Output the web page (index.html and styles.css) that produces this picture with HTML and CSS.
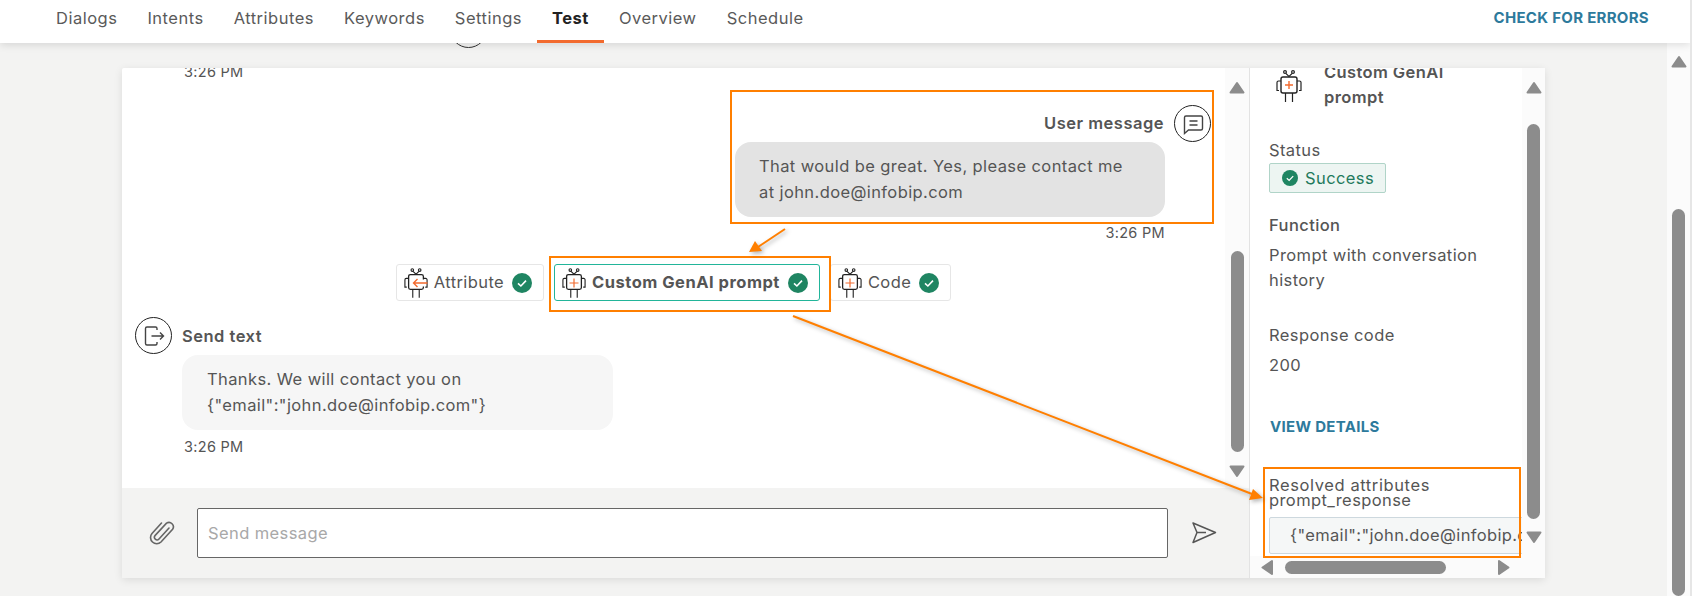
FILE: index.html
```html
<!DOCTYPE html>
<html>
  <head>
    <title>Test</title>
    <meta charset="UTF-8">
    <link rel="stylesheet" href="styles.css">
  </head>
  <body>
    <svg class="icon-defs" width="0" height="0">
      <symbol id="robot" viewBox="0 0 26 32">
        <g fill="none" stroke="#222" stroke-width="1.2">
          <circle cx="9" cy="2" r="1.4"/>
          <circle cx="17" cy="2" r="1.4"/>
          <path d="M9.8 3.4 13 6.5 16.2 3.4"/>
          <rect x="5" y="7" width="16" height="16" rx="2" stroke-width="1.4"/>
          <path d="M5 11H2.5A1.5 1.5 0 0 0 1 12.5V20.5H3M21 11H23.5A1.5 1.5 0 0 1 25 12.5V20.5H23M9.5 23V32M16.5 23V32"/>
        </g>
      </symbol>
      <symbol id="check" viewBox="0 0 20 20">
        <circle cx="10" cy="10" r="10" fill="#1f8562"/>
        <path d="M6 10.4 8.9 13 14 7.6" fill="none" stroke="#fff" stroke-width="1.6"/>
      </symbol>
      <symbol id="arrow-up" viewBox="0 0 16 13">
        <path d="M8 2 14.5 11.5H1.5Z" fill="#8c8c8c" stroke="#8c8c8c" stroke-width="2" stroke-linejoin="round"/>
      </symbol>
    </svg>

    <header class="topbar">
      <nav class="tabs">
        <a class="tab">Dialogs</a>
        <a class="tab">Intents</a>
        <a class="tab">Attributes</a>
        <a class="tab">Keywords</a>
        <a class="tab">Settings</a>
        <a class="tab active">Test</a>
        <a class="tab">Overview</a>
        <a class="tab">Schedule</a>
      </nav>
      <a class="link check-errors">CHECK FOR ERRORS</a>
    </header>

    <div class="workspace">
      <span class="peek-circle"></span>
      <main class="stage">
        <section class="card">
          <div class="chat">
            <div class="chat-body">
              <div class="messages">
                <div class="time time-clipped">3:26 PM</div>

                <div class="msg-head msg-head-right">
                  <span class="msg-title">User message</span>
                  <span class="round-icon">
                    <svg width="24" height="24" viewBox="0 0 24 24" fill="none" stroke="#444" stroke-width="1.4">
                      <path d="M3.5 5.5A1.5 1.5 0 0 1 5 4H20A1.5 1.5 0 0 1 21.5 5.5V16.5A1.5 1.5 0 0 1 20 18H7.5L3.5 21.5Z"/>
                      <path d="M8.5 9H16.5M8.5 13H16.5"/>
                    </svg>
                  </span>
                </div>
                <div class="bubble bubble-user">That would be great. Yes, please contact me<br>at john.doe@infobip.com</div>
                <div class="time time-right">3:26 PM</div>

                <div class="chips">
                  <div class="chip">
                    <svg class="chip-robot" width="24" height="30"><use href="#robot"/><path d="M19.4 11.5V18.5" stroke="#fff" stroke-width="4"/><path d="M23.5 15H9.5M13.5 11 9.5 15 13.5 19" fill="none" stroke="#f26a2e" stroke-width="1.4"/></svg>
                    <span>Attribute</span>
                    <svg width="20" height="20"><use href="#check"/></svg>
                  </div>
                  <div class="chip chip-selected">
                    <svg class="chip-robot" width="24" height="30"><use href="#robot"/><path d="M12 10.5V19.5M7.5 15H16.5" fill="none" stroke="#f26a2e" stroke-width="1.2"/></svg>
                    <strong>Custom GenAI prompt</strong>
                    <svg width="20" height="20"><use href="#check"/></svg>
                  </div>
                  <div class="chip">
                    <svg class="chip-robot" width="24" height="30"><use href="#robot"/><path d="M12 10.5V19.5M7.5 15H16.5" fill="none" stroke="#f26a2e" stroke-width="1.2"/></svg>
                    <span>Code</span>
                    <svg width="20" height="20"><use href="#check"/></svg>
                  </div>
                </div>

                <div class="msg-head msg-head-left">
                  <span class="round-icon">
                    <svg width="24" height="24" viewBox="0 0 24 24" fill="none" stroke="#444" stroke-width="1.4">
                      <path d="M15 6V4.5A1.5 1.5 0 0 0 13.5 3H5A1.5 1.5 0 0 0 3.5 4.5V19.5A1.5 1.5 0 0 0 5 21H13.5A1.5 1.5 0 0 0 15 19.5V18"/>
                      <path d="M9.5 12H21.5M18 8.5 21.5 12 18 15.5"/>
                    </svg>
                  </span>
                  <span class="msg-title">Send text</span>
                </div>
                <div class="bubble bubble-bot">Thanks. We will contact you on<br>{"email":"john.doe@infobip.com"}</div>
                <div class="time time-left">3:26 PM</div>
              </div>

              <div class="scrollbar scrollbar-chat">
                <svg class="scroll-arrow" width="16" height="13"><use href="#arrow-up"/></svg>
                <span class="thumb"></span>
                <svg class="scroll-arrow flip" width="16" height="13"><use href="#arrow-up"/></svg>
              </div>
            </div>

            <div class="composer">
              <svg class="clip-icon" width="26" height="28" viewBox="0 0 26 28" fill="none" stroke="#666" stroke-width="1.6" stroke-linecap="round">
                <path d="M20 9 10 20A2.6 2.6 0 0 1 6.2 16.4L17.5 4.2A4.4 4.4 0 0 1 23.6 10.3L12 23A6.2 6.2 0 0 1 3 14.5L12.5 4"/>
              </svg>
              <div class="message-input">Send message</div>
              <svg class="send-icon" width="26" height="24" viewBox="0 0 26 24" fill="none" stroke="#555" stroke-width="1.5" stroke-linejoin="round">
                <path d="M2 2 24.5 11.5 2 21.5 6 11.5ZM6 11.5H15"/>
              </svg>
            </div>
          </div>

          <aside class="details">
            <div class="details-content">
              <div class="details-head">
                <svg class="details-robot" width="26" height="32"><use href="#robot"/><path d="M13 11V19M9 15H17" fill="none" stroke="#f26a2e" stroke-width="1.4"/></svg>
                <strong>Custom GenAI<br>prompt</strong>
              </div>
              <div class="label label-status">Status</div>
              <div class="badge">
                <svg width="16" height="16"><use href="#check"/></svg>
                Success
              </div>
              <div class="label label-function">Function</div>
              <div class="value">Prompt with conversation<br>history</div>
              <div class="label label-response">Response code</div>
              <div class="value">200</div>
              <a class="link view-details">VIEW DETAILS</a>
              <div class="resolved-title">Resolved attributes</div>
              <div class="resolved-name">prompt_response</div>
              <div class="resolved-field">{"email":"john.doe@infobip.com"}</div>
            </div>

            <div class="scrollbar scrollbar-details">
              <svg class="scroll-arrow" width="16" height="13"><use href="#arrow-up"/></svg>
              <span class="thumb"></span>
              <svg class="scroll-arrow flip" width="16" height="13"><use href="#arrow-up"/></svg>
            </div>

            <div class="scrollbar-h">
              <svg class="scroll-arrow left" width="16" height="13"><use href="#arrow-up"/></svg>
              <span class="thumb-h"></span>
              <svg class="scroll-arrow right" width="16" height="13"><use href="#arrow-up"/></svg>
            </div>
          </aside>
        </section>
      </main>

      <div class="scrollbar scrollbar-page">
        <svg class="scroll-arrow" width="16" height="13"><use href="#arrow-up"/></svg>
        <span class="thumb"></span>
      </div>
    </div>

    <!-- orange callouts drawn on top of the screenshot -->
    <div class="callout callout-user"></div>
    <div class="callout callout-prompt"></div>
    <div class="callout callout-resolved"></div>
    <svg class="callout-arrows" width="1692" height="596">
      <path class="arrow-line" d="M785 229 758 247"/>
      <path class="arrow-head" d="M749 252 755 241 762 251Z"/>
      <path class="arrow-line" d="M793 316 1252 494"/>
      <path class="arrow-head" d="M1263 498 1249 500 1253 489Z"/>
    </svg>
  </body>
</html>
```

FILE: styles.css
```css
html, body {
  margin: 0;
  padding: 0;
  width: 1692px;
  height: 596px;
  overflow: hidden;
}

body {
  box-sizing: border-box;
  border-right: 2px solid #e6e6e6;
  background-color: #f3f3f2;
  font-family: Inter, "Noto Sans", sans-serif;
  font-size: 16.5px;
  letter-spacing: 0.4px;
  color: #555;
  position: relative;
}

.icon-defs {
  position: absolute;
}

.link {
  color: #2d7a9c;
  font-weight: 700;
  font-size: 15px;
  letter-spacing: 0.3px;
}

/* top bar */
.topbar {
  position: relative;
  z-index: 2;
  height: 43px;
  padding: 0 41px 0 41px;
  box-sizing: border-box;
  display: flex;
  align-items: center;
  justify-content: space-between;
  background-color: #fff;
  box-shadow: 0 2px 8px rgba(0, 0, 0, 0.12);
}

.tabs {
  display: flex;
  height: 100%;
}

.tab {
  padding: 0 15px;
  line-height: 37px;
  letter-spacing: 0.5px;
  color: #5a5a5a;
  border-bottom: 3px solid transparent;
  height: 40px;
}

.tab.active {
  color: #222;
  font-weight: 700;
  border-bottom-color: #f26a2e;
}

.check-errors {
  margin-bottom: 8px;
}

/* page below the bar */
.workspace {
  position: relative;
  display: flex;
  height: 553px;
}

.peek-circle {
  position: absolute;
  top: -32px;
  left: 450px;
  width: 35px;
  height: 35px;
  border: 1px solid #333;
  border-radius: 50%;
}

.stage {
  flex: 1;
  padding: 25px 122px 0 122px;
}

.card {
  position: relative;
  display: flex;
  height: 510px;
  background-color: #fff;
  box-shadow: 0 2px 8px rgba(0, 0, 0, 0.1);
  border-radius: 2px;
}

.chat {
  width: 1127px;
  display: flex;
  flex-direction: column;
}

.chat-body {
  flex: 1;
  display: flex;
  min-height: 0;
}

.messages {
  flex: 1;
  overflow: hidden;
}

.time {
  font-size: 14.5px;
  line-height: 20px;
  letter-spacing: 0.3px;
}

.time-clipped {
  margin: -6px 0 0 62px;
}

.time-right {
  margin: 6px 60px 0 0;
  text-align: right;
}

.time-left {
  margin: 7px 0 0 62px;
}

.msg-head {
  display: flex;
  align-items: center;
  gap: 10px;
  height: 37px;
}

.msg-head-right {
  justify-content: flex-end;
  margin-top: 23px;
  padding-right: 14px;
}

.msg-head-right .msg-title {
  margin-bottom: 2px;
}

.msg-head-left {
  margin-top: 16px;
  padding-left: 13px;
}

.msg-title {
  font-weight: 600;
  letter-spacing: 0.5px;
}

.round-icon {
  box-sizing: border-box;
  width: 37px;
  height: 37px;
  border: 1px solid #222;
  border-radius: 50%;
  display: flex;
  align-items: center;
  justify-content: center;
}

.bubble {
  box-sizing: border-box;
  width: 430px;
  height: 75px;
  padding-top: 11px;
  line-height: 26px;
  border-radius: 16px;
}

.bubble-user {
  margin: 0 60px 0 auto;
  padding-left: 24px;
  background-color: #e3e3e3;
}

.bubble-bot {
  margin: 1px 0 0 60px;
  padding-left: 25px;
  width: 431px;
  background-color: #f6f6f6;
}

.chips {
  display: flex;
  justify-content: center;
  gap: 10px;
  margin-top: 21px;
}

.chip {
  box-sizing: border-box;
  height: 37px;
  padding: 0 11px 2px 7px;
  display: flex;
  align-items: center;
  gap: 6px;
  border: 1px solid #e6e6e6;
  border-radius: 3px;
}

.chip > span,
.chip > strong {
  margin-right: 2px;
}

.chip > strong {
  letter-spacing: 0.5px;
}

.chip > svg {
  margin-bottom: -2px;
}

.chip-selected {
  border-color: #22b59a;
}

.chip-robot {
  flex: none;
}

/* scrollbars */
.scrollbar {
  display: flex;
  flex-direction: column;
  align-items: center;
  background-color: #fbfbfb;
}

.scroll-arrow {
  flex: none;
}

.scroll-arrow.flip {
  transform: rotate(180deg);
}

.scroll-arrow.left {
  transform: rotate(-90deg);
}

.scroll-arrow.right {
  transform: rotate(90deg);
}

.thumb {
  width: 13px;
  background-color: #8c8c8c;
  border-radius: 7px;
}

.scrollbar-chat {
  width: 24px;
  padding-top: 13px;
}

.scrollbar-chat .thumb {
  height: 201px;
  margin: 157px 0 13px;
}

.scrollbar-details {
  width: 23px;
  padding-top: 13px;
  border-left: 0;
}

.scrollbar-details .thumb {
  height: 395px;
  margin: 30px 0 12px;
}

.scrollbar-page {
  width: 23px;
  padding-top: 12px;
}

.scrollbar-page .thumb {
  height: 400px;
  margin-top: 141px;
}

/* composer */
.composer {
  height: 90px;
  display: flex;
  align-items: center;
  background-color: #f3f3f2;
  padding: 0 23px 0 27px;
}

.clip-icon {
  flex: none;
  margin-right: 22px;
}

.message-input {
  box-sizing: border-box;
  width: 971px;
  height: 50px;
  line-height: 48px;
  padding-left: 10px;
  background-color: #fff;
  border: 1px solid #666;
  border-radius: 2px;
  color: #a8a8a8;
}

.send-icon {
  flex: none;
  margin-left: 23px;
}

/* details side panel */
.details {
  box-sizing: border-box;
  width: 296px;
  border-left: 1px solid #e3e3e3;
  display: grid;
  grid-template-columns: 272px 23px;
  grid-template-rows: 488px 22px;
}

.details-content {
  overflow: hidden;
  padding-left: 19px;
}

.details-head {
  display: flex;
  align-items: flex-start;
  margin-top: -8px;
  line-height: 25px;
}

.details-head strong {
  font-weight: 600;
  margin-left: 22px;
}

.details-robot {
  margin: 10px 0 0 7px;
  flex: none;
}

.label {
  line-height: 20px;
}

.label-status {
  margin-top: 30px;
}

.label-function {
  margin-top: 22px;
  font-weight: 500;
}

.label-response {
  margin-top: 32px;
}

.value {
  margin-top: 8px;
  line-height: 25px;
}

.badge {
  box-sizing: border-box;
  width: 117px;
  height: 30px;
  margin-top: 3px;
  padding-left: 12px;
  display: flex;
  align-items: center;
  gap: 7px;
  background-color: #edf5f2;
  border: 1px solid #b0d4c8;
  border-radius: 2px;
  color: #1f7a5c;
}

.view-details {
  display: block;
  margin: 39px 0 0 1px;
  line-height: 20px;
}

.resolved-title {
  margin-top: 40px;
  line-height: 16px;
  letter-spacing: 0.6px;
}

.resolved-name {
  line-height: 15px;
}

.resolved-field {
  box-sizing: border-box;
  width: 320px;
  height: 37px;
  margin-top: 9px;
  padding-left: 20px;
  line-height: 34px;
  letter-spacing: 0.35px;
  white-space: nowrap;
  overflow: hidden;
  background-color: #f5f7f7;
  border: 1px solid #cdd8de;
  border-radius: 2px;
}

.details > .scrollbar-details {
  grid-row: 1 / 3;
  grid-column: 2;
}

.scrollbar-h {
  grid-row: 2;
  grid-column: 1;
  display: flex;
  align-items: center;
  padding: 0 4px 0 9px;
  background-color: #fbfbfb;
}

.thumb-h {
  flex: none;
  width: 161px;
  height: 13px;
  margin: 0 50px 0 10px;
  background-color: #8c8c8c;
  border-radius: 7px;
}

/* callouts */
.callout {
  position: absolute;
  z-index: 3;
  box-sizing: border-box;
  border: 2px solid #ff7f00;
}

.callout-user {
  left: 730px;
  top: 90px;
  width: 484px;
  height: 134px;
}

.callout-prompt {
  left: 549px;
  top: 256px;
  width: 282px;
  height: 56px;
}

.callout-resolved {
  left: 1263px;
  top: 467px;
  width: 258px;
  height: 91px;
}

.callout-arrows {
  position: absolute;
  z-index: 3;
  left: 0;
  top: 0;
  filter: drop-shadow(2px 2px 2px rgba(0, 0, 0, 0.3));
}

.arrow-line {
  fill: none;
  stroke: #ff7f00;
  stroke-width: 2;
}

.arrow-head {
  fill: #ff7f00;
}
```
